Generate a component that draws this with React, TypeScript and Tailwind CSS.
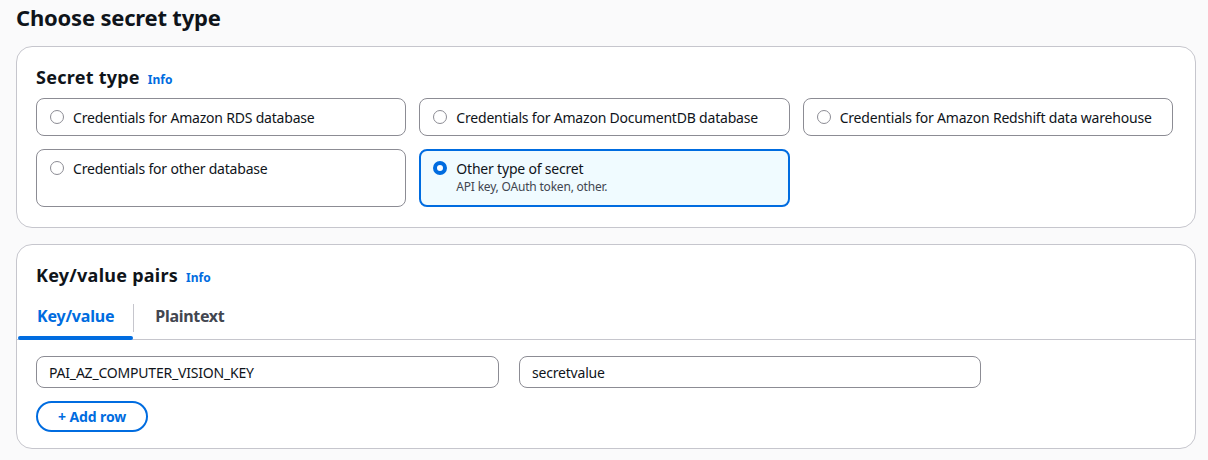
import { useState } from 'react';

const options = [
  { id: 'rds', label: 'Credentials for Amazon RDS database' },
  { id: 'docdb', label: 'Credentials for Amazon DocumentDB database' },
  { id: 'redshift', label: 'Credentials for Amazon Redshift data warehouse' },
  { id: 'otherdb', label: 'Credentials for other database' },
  { id: 'other', label: 'Other type of secret', desc: 'API key, OAuth token, other.' },
];

const Info = () => (
  <a className="ml-2 text-[12px] font-bold text-[#006ce0] leading-none">Info</a>
);

const App = () => {
  const [selected, setSelected] = useState('other');
  const [tab, setTab] = useState('kv');

  return (
    <div className="min-h-[460px] w-full bg-[#fafafb] pl-4 pr-[12px] pt-[3px] text-[#0f141a] font-['Noto_Sans',sans-serif]">
      <h1 className="text-[22px] font-bold leading-[28px] tracking-[-0.2px]">Choose secret type</h1>

      <div className="mt-[15px] rounded-2xl border border-[#c6c6cd] bg-white px-[19px] pt-[18px] pb-5">
        <div className="flex items-baseline">
          <h2 className="text-[18px] font-bold leading-[24px] tracking-[0.25px]">Secret type</h2>
          <Info />
        </div>
        <div className="mt-[9px] grid grid-cols-3 gap-[13px] w-[1137px]">
          {options.map(o => {
            const on = selected === o.id;
            return (
              <label
                key={o.id}
                onClick={() => setSelected(o.id)}
                className={
                  on
                    ? 'flex items-start gap-[9px] rounded-lg border-2 border-[#006ce0] bg-[#f0fbff] px-[12px] pt-[8px] pb-[10px] cursor-pointer'
                    : 'flex items-start gap-[9px] rounded-lg border border-[#8c8c94] bg-white px-[13px] pt-[9px] pb-[7px] cursor-pointer'
                }
              >
                <span
                  className={
                    on
                      ? 'mt-[2px] h-[14px] w-[14px] shrink-0 rounded-full border-[4px] border-[#006ce0] bg-white'
                      : 'mt-[2px] h-[14px] w-[14px] shrink-0 rounded-full border border-[#8c8c94] bg-white'
                  }
                />
                <span className="flex flex-col tracking-[-0.2px]">
                  <span className="text-[14px] leading-[20px]">{o.label}</span>
                  {o.desc && <span className="text-[12px] leading-[16px] text-[#424650]">{o.desc}</span>}
                </span>
              </label>
            );
          })}
        </div>
      </div>

      <div className="mt-4 rounded-2xl border border-[#c6c6cd] bg-white pb-4">
        <div className="flex items-baseline px-[19px] pt-[18px]">
          <h2 className="text-[18px] font-bold leading-[24px] tracking-[0.25px]">Key/value pairs</h2>
          <Info />
        </div>
        <div className="mt-[10px] flex items-center border-b border-[#c6c6cd] px-[1px]">
          <button
            onClick={() => setTab('kv')}
            className={
              tab === 'kv'
                ? 'relative px-[19px] pt-[9px] pb-[13px] text-[16px] font-bold leading-[20px] tracking-[-0.2px] text-[#006ce0]'
                : 'relative px-[19px] pt-[9px] pb-[13px] text-[16px] font-bold leading-[20px] tracking-[-0.2px] text-[#424650]'
            }
          >
            Key/value
            {tab === 'kv' && <span className="absolute left-0 right-0 -bottom-px h-[4px] rounded-full bg-[#006ce0]" />}
          </button>
          <span className="h-[28px] w-px bg-[#c6c6cd]" />
          <button
            onClick={() => setTab('plain')}
            className={
              tab === 'plain'
                ? 'relative px-[21px] pt-[9px] pb-[13px] text-[16px] font-bold leading-[20px] tracking-[-0.3px] text-[#006ce0]'
                : 'relative px-[21px] pt-[9px] pb-[13px] text-[16px] font-bold leading-[20px] tracking-[-0.3px] text-[#424650]'
            }
          >
            Plaintext
            {tab === 'plain' && <span className="absolute left-0 right-0 -bottom-px h-[4px] rounded-full bg-[#006ce0]" />}
          </button>
        </div>
        <div className="px-[19px] pt-4">
          <div className="flex gap-5">
            <input
              defaultValue="PAI_AZ_COMPUTER_VISION_KEY"
              className="h-[32px] w-[463px] rounded-lg border border-[#8c8c94] px-3 text-[14px] tracking-[-0.2px] outline-none"
            />
            <input
              defaultValue="secretvalue"
              className="h-[32px] w-[462px] rounded-lg border border-[#8c8c94] px-3 text-[14px] tracking-[-0.2px] outline-none"
            />
          </div>
          <button className="mt-[13px] h-[31px] rounded-full border-2 border-[#006ce0] px-5 text-[14px] font-bold tracking-[-0.1px] text-[#006ce0]">
            + Add row
          </button>
        </div>
      </div>
    </div>
  );
};

export default App;
